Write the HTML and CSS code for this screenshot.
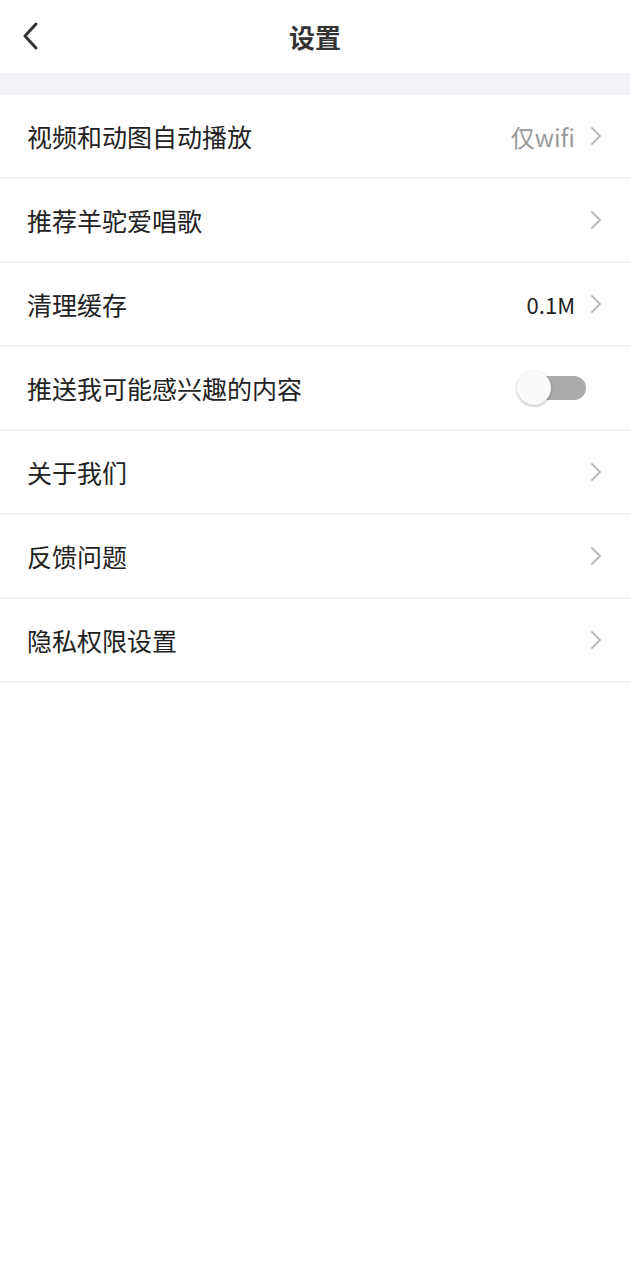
FILE: index.html
```html
<!DOCTYPE html>
<html lang="zh-CN">
<head>
<meta charset="UTF-8">
<meta name="viewport" content="width=device-width, initial-scale=1.0">
<title>设置</title>
<link rel="stylesheet" href="styles.css">
</head>
<body>
<div class="header">
    <button class="back-button">
        <svg width="18" height="28" viewBox="0 0 18 28"><path d="M15 2 L4 14 L15 26" fill="none" stroke="#333" stroke-width="3" stroke-linecap="round" stroke-linejoin="round"/></svg>
    </button>
    <div class="title">设置</div>
</div>
<div class="gap"></div>
<div class="list">
    <div class="row">
        <span class="label">视频和动图自动播放</span>
        <span class="value muted">仅wifi</span>
        <svg class="arrow" width="14" height="20" viewBox="0 0 14 20"><path d="M3 2 L11 10 L3 18" fill="none" stroke="#bbb" stroke-width="2" stroke-linecap="round" stroke-linejoin="round"/></svg>
    </div>
    <div class="row">
        <span class="label">推荐羊驼爱唱歌</span>
        <svg class="arrow" width="14" height="20" viewBox="0 0 14 20"><path d="M3 2 L11 10 L3 18" fill="none" stroke="#bbb" stroke-width="2" stroke-linecap="round" stroke-linejoin="round"/></svg>
    </div>
    <div class="row">
        <span class="label">清理缓存</span>
        <span class="value">0.1M</span>
        <svg class="arrow" width="14" height="20" viewBox="0 0 14 20"><path d="M3 2 L11 10 L3 18" fill="none" stroke="#bbb" stroke-width="2" stroke-linecap="round" stroke-linejoin="round"/></svg>
    </div>
    <div class="row">
        <span class="label">推送我可能感兴趣的内容</span>
        <div class="toggle"><div class="knob"></div></div>
    </div>
    <div class="row">
        <span class="label">关于我们</span>
        <svg class="arrow" width="14" height="20" viewBox="0 0 14 20"><path d="M3 2 L11 10 L3 18" fill="none" stroke="#bbb" stroke-width="2" stroke-linecap="round" stroke-linejoin="round"/></svg>
    </div>
    <div class="row">
        <span class="label">反馈问题</span>
        <svg class="arrow" width="14" height="20" viewBox="0 0 14 20"><path d="M3 2 L11 10 L3 18" fill="none" stroke="#bbb" stroke-width="2" stroke-linecap="round" stroke-linejoin="round"/></svg>
    </div>
    <div class="row">
        <span class="label">隐私权限设置</span>
        <svg class="arrow" width="14" height="20" viewBox="0 0 14 20"><path d="M3 2 L11 10 L3 18" fill="none" stroke="#bbb" stroke-width="2" stroke-linecap="round" stroke-linejoin="round"/></svg>
    </div>
</div>
</body>
</html>
```

FILE: styles.css
```css
body {
    margin: 0;
    background-color: #fff;
    font-family: "Noto Sans CJK SC", "Noto Sans", sans-serif;
    color: #222;
}
.header {
    height: 73px;
    display: flex;
    align-items: center;
    justify-content: center;
    position: relative;
}
.back-button {
    position: absolute;
    left: 21px;
    top: 22px;
    background: none;
    border: none;
    padding: 0;
    cursor: pointer;
}
.title {
    font-size: 26px;
    font-weight: 700;
    color: #333;
}
.gap {
    height: 22px;
    background-color: #f2f4f7;
}
.row {
    height: 82px;
    border-bottom: 2px solid #f3f3f3;
    display: flex;
    align-items: center;
    padding: 0 27px 0 27px;
}
.label {
    flex: 1;
    font-size: 25px;
}
.value {
    font-size: 22px;
    color: #222;
    margin-right: 14px;
}
.value.muted {
    font-size: 24px;
    color: #999;
}
.arrow {
    display: block;
}
.toggle {
    width: 64px;
    height: 24px;
    border-radius: 12px;
    background-color: #aaa;
    position: relative;
    margin-right: 17px;
}
.knob {
    position: absolute;
    left: -5px;
    top: -5px;
    width: 34px;
    height: 34px;
    border-radius: 50%;
    background-color: #fafafa;
    box-shadow: 0 1px 3px rgba(0, 0, 0, 0.3);
}
```
